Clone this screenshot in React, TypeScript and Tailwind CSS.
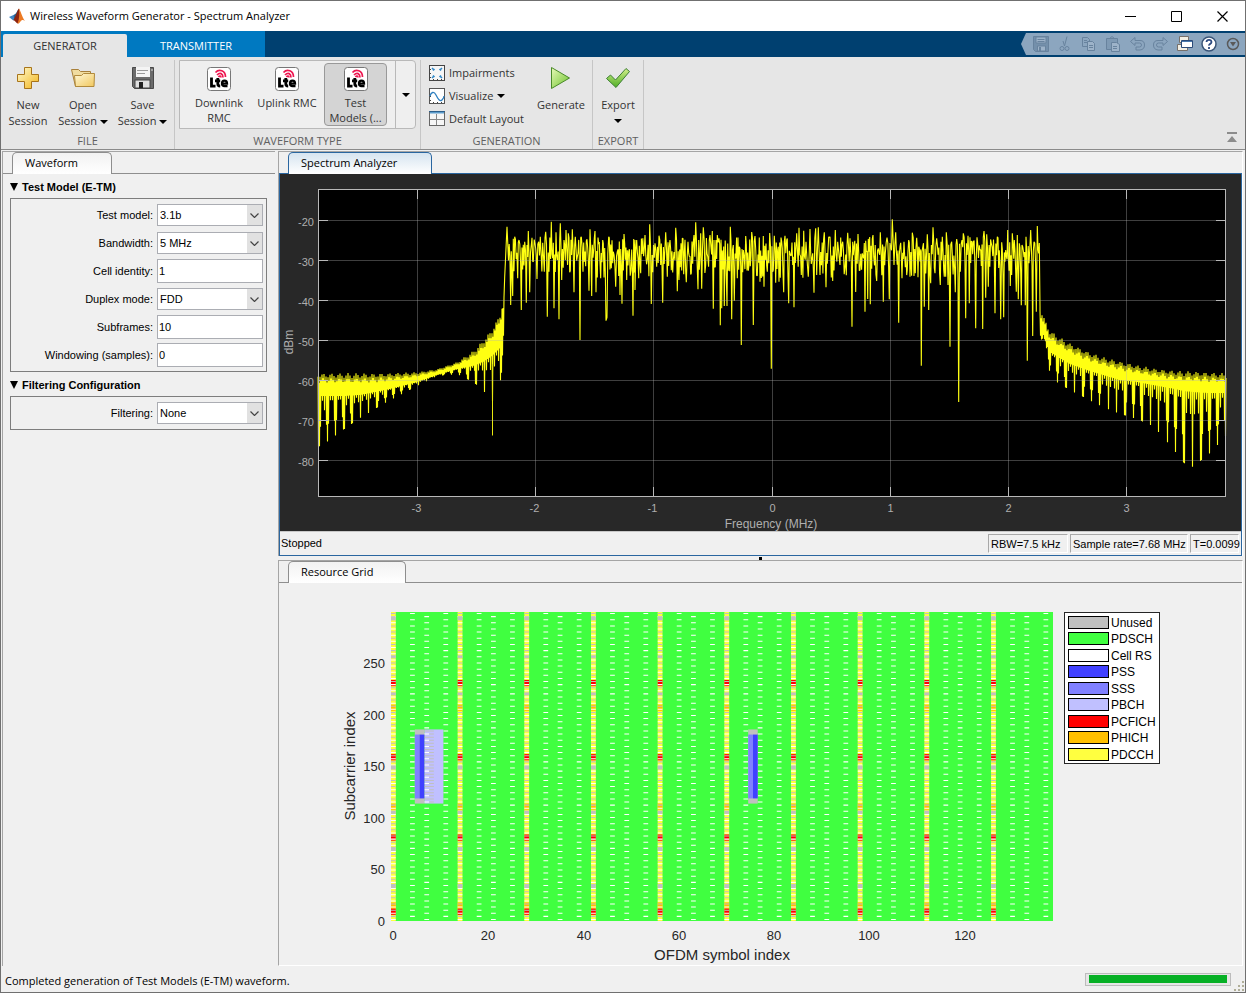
import type { ReactNode } from 'react';

/* ---------- spectrum data ---------- */

type Point = [number, number];

// envelopes are in plot pixels: [x, top, bottom, spike]
const LEFT_SKIRT = [
  [38, 199, 222, 273],
  [47, 199, 222, 268],
  [63, 199, 222, 256],
  [80, 199, 221, 244],
  [105, 199, 216, 229],
  [137, 198, 208, 212],
  [157, 195, 201, 202],
  [177, 188, 195, 200],
  [193, 177, 192, 208],
  [203, 166, 188, 216],
  [212, 155, 182, 228],
  [220, 140, 174, 210],
  [224, 122, 160, 180],
];

const RIGHT_SKIRT = [
  [760, 133, 150, 160],
  [767, 150, 172, 185],
  [770, 156, 178, 199],
  [778, 162, 183, 209],
  [790, 169, 190, 216],
  [807, 177, 196, 225],
  [823, 183, 201, 233],
  [840, 187, 206, 240],
  [857, 191, 208, 245],
  [873, 194, 211, 252],
  [890, 196, 214, 271],
  [904, 197, 217, 289],
  [913, 197, 218, 293],
  [929, 198, 219, 280],
  [946, 199, 219, 262],
];

// dips and peaks inside the occupied band, thirds of a pixel from the offset
const BAND = [
  {
    from: 200,
    points: [
      74, 200, 81, 50, 92, 285, 98, 258, 104, 80, 113, 205, 117, 90, 124, 300, 134, 95, 139, 278, 145, 63, 149, 247,
      154, 105, 160, 155, 165, 100, 171, 207, 176, 95, 181, 80, 188, 98, 193, 185, 197, 65, 202, 320, 207, 185, 214, 35,
      222, 295, 228, 67, 232, 150, 237, 328, 241, 40, 245, 210, 252, 90, 258, 60, 265, 70, 271, 182, 277, 58, 282, 247,
      286, 80, 294, 130, 300, 390, 304, 80, 309, 185, 321, 88, 327, 242, 330, 58, 335, 258, 341, 120, 345, 63, 348, 247,
      356, 102, 362, 205, 368, 90, 378, 332, 381, 322, 386, 80, 394, 175, 400, 125, 407, 230, 412, 125, 420, 255, 426, 281,
      432, 72, 440, 210, 446, 125, 453, 180, 459, 317, 465, 90, 465, 240, 470, 90, 476, 205, 482, 190, 495, 75, 502, 150,
      509, 43, 514, 282, 525, 100, 530, 170, 537, 77, 542, 165, 548, 278, 557, 67, 562, 200, 570, 90, 580, 150, 587, 53,
      592, 244, 597, 210, 607, 85, 613, 130, 619, 217, 624, 95, 634, 190, 642, 75, 647, 37, 654, 238, 662, 70, 665, 236,
      670, 52, 677, 165, 690, 75, 697, 63, 700, 296, 706, 170, 712, 75, 717, 85, 721, 346, 725, 155, 725, 295, 733, 288,
      738, 160, 741, 288, 751, 50, 755, 328, 760, 105, 763, 272, 772, 205, 778, 110, 784, 405, 790, 120, 797, 78, 807, 165,
      815, 66, 820, 345, 825, 78, 832, 197, 840, 215, 850, 78, 852, 230, 862, 185, 869, 69, 874, 476, 880, 180,
    ],
  },
  {
    from: 490,
    points: [
      13, 77, 17, 218, 25, 110, 27, 215, 35, 95, 41, 247, 45, 77, 50, 90, 56, 280, 60, 130, 72, 292, 80, 70, 87, 53, 94, 195,
      101, 62, 108, 95, 115, 200, 120, 57, 126, 145, 132, 248, 137, 55, 140, 195, 145, 52, 150, 195, 163, 67, 168, 232,
      176, 80, 180, 80, 188, 213, 196, 60, 203, 95, 210, 165, 218, 95, 225, 170, 233, 68, 240, 85, 246, 350, 252, 110,
      257, 246, 264, 72, 270, 180, 277, 130, 285, 305, 289, 125, 293, 267, 297, 125, 301, 283, 309, 75, 320, 213, 325, 115,
      331, 67, 340, 275, 346, 130, 351, 83, 358, 268, 362, 110, 367, 28, 372, 165, 377, 67, 386, 338, 390, 110, 396, 205,
      402, 95, 412, 180, 416, 90, 420, 200, 427, 68, 432, 198, 440, 83, 446, 110, 454, 467, 458, 112, 463, 290, 472, 73,
      476, 300, 482, 220, 489, 52, 495, 190, 500, 85, 511, 225, 517, 80, 523, 200, 529, 67, 534, 225, 540, 410, 545, 95,
      556, 247, 560, 87, 566, 576, 571, 185, 576, 90, 580, 70, 587, 325, 594, 77, 598, 280, 606, 95, 610, 95, 617, 355,
      621, 82, 630, 120, 638, 357, 642, 63, 647, 263, 650, 73, 655, 230, 664, 100, 675, 310, 682, 80, 692, 328, 695, 97,
      701, 322, 707, 120, 713, 60, 721, 228, 727, 70, 733, 90, 739, 245, 742, 75, 745, 268, 748, 100, 754, 286, 758, 110,
      766, 286, 768, 80, 772, 452, 777, 160, 782, 60, 788, 378, 792, 95, 799, 305, 802, 48, 806, 130, 810, 290,
    ],
  },
];

function random(seed: number) {
  let s = seed;
  return () => {
    s = (s * 1664525 + 1013904223) % 4294967296;
    return s / 4294967296;
  };
}

function skirt(rows: number[][], firstSpike: number, period: number): Point[] {
  const out: Point[] = [];
  const end = rows[rows.length - 1][0];
  let i = 0;
  for (let n = 0, x = rows[0][0]; x <= end; n++, x += 0.5) {
    while (i < rows.length - 2 && rows[i + 1][0] < x) i++;
    const [a, b] = [rows[i], rows[i + 1]];
    const t = (x - a[0]) / (b[0] - a[0]);
    const [top, solid, spike] = [1, 2, 3].map((k) => a[k] + (b[k] - a[k]) * t);
    const phase = (((x - firstSpike) / period) % 1 + 1) % 1;
    const d = Math.min(phase, 1 - phase);
    const depth = d < 0.08 ? 1 : d < 0.2 ? 0.62 : d < 0.34 ? 0.3 : 0.1;
    const spread = Math.min(1, (solid - top) / 20);
    if (n % 2 === 0) out.push([x, top + (1 - 2 * d) * 5 * spread + (n % 4 ? 5 * spread : 0)]);
    else out.push([x, solid + (n % 4 === 1 || d < 0.08 ? (spike - solid) * depth : 0)]);
  }
  return out;
}

function band(): Point[] {
  const rnd = random(11);
  const keys: Point[] = BAND.flatMap(({ from, points }) => {
    const out: Point[] = [];
    for (let i = 0; i < points.length; i += 2) out.push([from + points[i] / 3, 36 + points[i + 1] / 3]);
    return out;
  });
  const out: Point[] = [];
  keys.forEach((key, i) => {
    out.push(key);
    const next = keys[i + 1];
    if (!next || i < 1) return;
    const gap = next[0] - key[0];
    const steps = Math.floor(gap / 0.65);
    for (let k = 1; k < steps; k++) {
      const y = k % 2 ? 63 + rnd() * 20 : 80 + rnd() * 24;
      out.push([key[0] + (gap * k) / steps, y]);
    }
  });
  return out;
}

const toPath = (points: Point[]) => 'M' + points.map(([x, y]) => `${x.toFixed(1)} ${y.toFixed(1)}`).join('L');

const TRACE = toPath([
  ...skirt(LEFT_SKIRT, 47.3, 8.27),
  ...band(),
  ...skirt(RIGHT_SKIRT, 769.3, 8.42),
]);

const FREQ_TICKS = [-3, -2, -1, 0, 1, 2, 3].map((label, i) => ({ label, x: 137.5 + Math.round(i * 118.2) }));
const POWER_TICKS = [-20, -30, -40, -50, -60, -70, -80].map((label, i) => ({ label, y: 46.5 + i * 40 }));

const SpectrumPlot = () => (
  <svg viewBox="0 0 961 357" className="block w-full h-auto bg-[#282828] font-['Liberation_Sans',sans-serif]">
    <rect x="38.5" y="15.5" width="907" height="307" fill="#000" />
    <path d={TRACE} fill="none" stroke="#ffff12" strokeWidth="1.1" strokeLinejoin="bevel" />
    {/* the deep null left of the band */}
    <path d="M212.500 190V261.500" stroke="#e8e810" />
    <g stroke="#b4b4b4" strokeOpacity="0.35">
      {FREQ_TICKS.map(({ x }) => (
        <path key={x} d={`M${x} 16V322`} />
      ))}
      {POWER_TICKS.map(({ y }) => (
        <path key={y} d={`M39 ${y}H945`} />
      ))}
    </g>
    <g stroke="#b8b8b8" fill="none">
      <rect x="38.5" y="15.5" width="907" height="307" />
      {FREQ_TICKS.map(({ x }) => (
        <path key={x} d={`M${x} 16v9M${x} 322v-9`} />
      ))}
      {POWER_TICKS.map(({ y }) => (
        <path key={y} d={`M39 ${y}h9M945 ${y}h-9`} />
      ))}
    </g>
    <g fill="#afafaf" fontSize="11">
      {FREQ_TICKS.map(({ label, x }) => (
        <text key={label} x={x - (label < 0 ? 1 : 0)} y="338" textAnchor="middle">
          {label}
        </text>
      ))}
      {POWER_TICKS.map(({ label, y }) => (
        <text key={label} x="34" y={y + 5.5} textAnchor="end">
          {label}
        </text>
      ))}
      <text x="491" y="354" textAnchor="middle" fontSize="12">
        Frequency (MHz)
      </text>
      <text transform="translate(13 168) rotate(-90)" textAnchor="middle" fontSize="12">
        dBm
      </text>
    </g>
  </svg>
);

/* ---------- resource grid ---------- */

const COL = 662 / 139;
const ROW = 309 / 300;
const GRID_LEFT = 112;
const GRID_BOTTOM = 338;

const colX = (symbol: number) => GRID_LEFT + symbol * COL;
const rowY = (k: number) => GRID_BOTTOM - k * ROW;

const LEGEND = [
  ['Unused', '#c0c0c0'],
  ['PDSCH', '#40ff40'],
  ['Cell RS', '#ffffff'],
  ['PSS', '#4040ff'],
  ['SSS', '#8080ff'],
  ['PBCH', '#c0c0ff'],
  ['PCFICH', '#ff0000'],
  ['PHICH', '#ffc000'],
  ['PDCCH', '#ffff40'],
];

type BlockProps = { symbol: number; cols?: number; from: number; to: number; fill: string };

const Block = ({ symbol, cols = 1, from, to, fill }: BlockProps) => (
  <rect x={colX(symbol)} y={rowY(to)} width={cols * COL} height={(to - from) * ROW} fill={fill} />
);

type PilotProps = { symbol: number; shift: number; from?: number; to?: number; stroke?: string };

const Pilots = ({ symbol, shift, from = 0, to = 300, stroke = '#fff' }: PilotProps) => (
  <path
    d={`M${colX(symbol) + COL / 2} ${rowY(from + shift)}V${rowY(to)}`}
    stroke={stroke}
    strokeWidth={COL}
    strokeDasharray={`${ROW} ${5 * ROW}`}
  />
);

const UNUSED = [[32, 36], [68, 72], [104, 107], [147, 151], [219, 222], [255, 258], [292, 296]];
const PCFICH = [6, 78, 156, 228];
const PHICH = [12, 108, 204];

const SUBFRAMES = Array.from({ length: 10 }, (_, i) => i * 14);

const ResourceGridPlot = () => (
  <svg viewBox="0 0 963 382" className="block w-full h-auto font-['Liberation_Sans',sans-serif]">
    <rect x={GRID_LEFT} y="29" width="662" height="309" fill="#40ff40" />
    {SUBFRAMES.map((s) => (
      <g key={s}>
        <Block symbol={s} from={0} to={300} fill="#ffff40" />
        {PHICH.map((k) => (
          <Block key={k} symbol={s} from={k} to={k + 6} fill="#ffc000" />
        ))}
        {PCFICH.map((k) => (
          <Block key={k} symbol={s} from={k} to={k + 6} fill="#ff0000" />
        ))}
        <Pilots symbol={s} shift={1} />
        <Pilots symbol={s} shift={4} stroke="#c0c0c0" />
        {UNUSED.map(([from, to]) => (
          <Block key={from} symbol={s} from={from} to={to} fill="#c0c0c0" />
        ))}
        <Pilots symbol={s + 4} shift={4} />
        <Pilots symbol={s + 7} shift={1} />
        {s + 11 < 139 && <Pilots symbol={s + 11} shift={4} />}
      </g>
    ))}

    {/* broadcast channel */}
    <Block symbol={7} cols={4} from={114} to={186} fill="#c0c0ff" />
    <Pilots symbol={7} shift={1} from={114} to={186} />
    <Pilots symbol={7} shift={4} from={114} to={186} stroke="#c0c0c0" />
    <Pilots symbol={8} shift={1} from={114} to={186} stroke="#c0c0c0" />
    <Pilots symbol={8} shift={4} from={114} to={186} stroke="#c0c0c0" />

    {/* sync signals */}
    {[5, 75].map((symbol) => (
      <g key={symbol}>
        <Block symbol={symbol} cols={2} from={114} to={186} fill="#c0c0c0" />
        <Block symbol={symbol} from={119} to={181} fill="#8080ff" />
        <Block symbol={symbol + 1} from={119} to={181} fill="#4040ff" />
      </g>
    ))}

    <g fill="#262626" fontSize="13">
      {[0, 50, 100, 150, 200, 250].map((v) => (
        <text key={v} x="106" y={Math.floor(rowY(v)) + 5} textAnchor="end">
          {v}
        </text>
      ))}
      {[0, 20, 40, 60, 80, 100, 120].map((v) => (
        <text key={v} x={Math.round(colX(v)) + 2} y="357" textAnchor="middle">
          {v}
        </text>
      ))}
      <text x="443" y="377" textAnchor="middle" fontSize="15">
        OFDM symbol index
      </text>
      <text transform="translate(76 183) rotate(-90)" textAnchor="middle" fontSize="15">
        Subcarrier index
      </text>
    </g>

    <rect x="785.5" y="29.5" width="95" height="151" fill="#fff" stroke="#262626" />
    {LEGEND.map(([name, fill], i) => {
      const y = 33 + Math.floor(i * 16.5);
      return (
        <g key={name}>
          <rect x="789.5" y={y + 0.5} width="40" height="12" fill={fill} stroke="#000" />
          <text x="832" y={y + 11} fontSize="12">
            {name}
          </text>
        </g>
      );
    })}
  </svg>
);

/* ---------- icons ---------- */

const MatlabLogo = () => (
  <svg viewBox="0 0 16 16" className="size-4">
    <path d="M0 9L4.500 7 7 9.500 4.300 12.500z" fill="#3f86c4" />
    <path d="M4.500 7C6.500 6.500 7.500 4.500 9.500 1L8.500 8 5.500 11z" fill="#27608f" />
    <path d="M10 .500C8.500 1.500 7.500 7 4.300 12.200 6 12 7 15 8.500 15.500c2-.500 3-5 4.500-4z" fill="#8c2410" />
    <path d="M10 .500c1.500 2 3 8.500 6 12.500-2-1.500-3.500-1-4.500.500-1 1.500-2 2.500-3 2C10.500 11 10.500 5 10 .500z" fill="#ec7a24" />
  </svg>
);

const PlusIcon = () => (
  <svg viewBox="0 0 24 24" className="size-6">
    <defs>
      <linearGradient id="gold" x1="0" y1="0" x2="1" y2="1">
        <stop offset="0" stopColor="#fffbd0" />
        <stop offset="1" stopColor="#f2b51c" />
      </linearGradient>
    </defs>
    <path d="M8.500 1.500h7v7h7v7h-7v7h-7v-7h-7v-7h7z" fill="url(#gold)" stroke="#a8741a" />
  </svg>
);

const FolderIcon = () => (
  <svg viewBox="0 0 26 24" className="w-[26px] h-6">
    <defs>
      <linearGradient id="folder" x1="0" y1="0" x2="1" y2="1">
        <stop offset="0" stopColor="#fff9da" />
        <stop offset="1" stopColor="#f1c75c" />
      </linearGradient>
    </defs>
    <path d="M5.500 20.500L1.500 3.500h7l2 2h10v4z" fill="#f0dca0" stroke="#a8803a" />
    <path d="M5.500 20.500L4.500 9.500h7l2-2h11l-.500 13z" fill="url(#folder)" stroke="#b18a3c" />
  </svg>
);

const SaveIcon = () => (
  <svg viewBox="0 0 24 24" className="size-6">
    <path d="M1.500 1.500h21v21h-19l-2-2z" fill="#6b6b6b" stroke="#4a4a4a" />
    <rect x="5" y="1" width="14" height="10" fill="#f4f4f4" />
    <path d="M6 4.500h11M6 7.500h8" stroke="#9a9a9a" />
    <rect x="4" y="14" width="15" height="8" fill="#e0e0e0" stroke="#444" />
    <rect x="8" y="16" width="4" height="6" fill="#222" />
    <path d="M21 3v2" stroke="#ddd" />
  </svg>
);

const LteIcon = () => (
  <svg viewBox="0 0 24 24" className="size-6">
    <rect x="0.500" y="0.500" width="23" height="23" rx="3" fill="#fff" stroke="#777" />
    <g stroke="#ee1650" fill="none" strokeWidth="1.700">
      <path d="M8.500 5.500C12 1.500 18.500 3.500 18.500 10" />
      <path d="M10 8c3-3 6-1.500 6 2.500" />
      <path d="M11.500 10c1-1.500 2.500-1 2.500.500" />
    </g>
    <g stroke="#000" fill="none" strokeWidth="2.800">
      <path d="M4.500 10.500v8.600H8.500" />
      <path d="M10.800 11v6q0 2 2.400 2M8 13.800h5.200" />
      <path d="M15 16.600h5q0-3-2.500-3t-2.500 2.800 2.700 2.700h2.800" strokeWidth="2.300" />
    </g>
  </svg>
);

const ImpairmentsIcon = () => (
  <svg viewBox="0 0 16 16" className="size-4">
    <rect x="0.500" y="0.500" width="15" height="15" fill="#f6f6f6" stroke="#444" />
    <path d="M4.500 15v-1M8.500 15v-1M12.500 15v-1M1 4.500h1M1 8.500h1M1 12.500h1" stroke="#444" />
    <path d="M4 5.500L5.500 4M3 3l1.500 1.500M12 5.500L10.500 4M13 3l-1.500 1.500M4 10.500L5.500 12M3 13l1.500-1.500M12 10.500L10.500 12M13 13l-1.500-1.500" stroke="#2d86c6" strokeWidth="1.500" fill="none" />
  </svg>
);

const VisualizeIcon = () => (
  <svg viewBox="0 0 16 16" className="size-4">
    <rect x="0.500" y="0.500" width="15" height="15" fill="#fff" stroke="#555" />
    <path d="M1 12.500h1M1 8.500h1M4.500 15v-1M8.500 15v-1M12.500 15v-1" stroke="#444" />
    <path d="M1 8C2 4 5 3 7 7s4 7 6 5c1-1 2-3 2-4" fill="none" stroke="#2d7fc0" strokeWidth="1.300" />
  </svg>
);

const LayoutIcon = () => (
  <svg viewBox="0 0 16 16" className="size-4">
    <rect x="0.500" y="0.500" width="15" height="14" fill="#f6f6f6" stroke="#666" />
    <path d="M1 1.500h14" stroke="#5c9ccc" strokeWidth="2" />
    <path d="M0 .500h16" stroke="#2c5f8c" />
    <path d="M7.500 3v11M1 8.500h14" stroke="#888" />
  </svg>
);

const PlayIcon = () => (
  <svg viewBox="0 0 24 24" className="size-6">
    <defs>
      <linearGradient id="play" x1="0" y1="0" x2="1" y2="1">
        <stop offset="0" stopColor="#e8f9b8" />
        <stop offset="1" stopColor="#6ac22a" />
      </linearGradient>
    </defs>
    <path d="M2.500 1.500v21L20.500 12z" fill="url(#play)" stroke="#4a8a2a" />
  </svg>
);

const CheckIcon = () => (
  <svg viewBox="0 0 26 24" className="w-[26px] h-6">
    <defs>
      <linearGradient id="check" x1="0" y1="0" x2="0" y2="1">
        <stop offset="0" stopColor="#d3ef8a" />
        <stop offset="1" stopColor="#4fae25" />
      </linearGradient>
    </defs>
    <path d="M1.500 12.500l4-3.500 5 5L21 2.500l3.500 3L11 21.500z" fill="url(#check)" stroke="#3d7f35" />
  </svg>
);

const Caret = () => (
  <svg viewBox="0 0 8 4" className="inline-block w-2 h-1 shrink-0 align-middle">
    <path d="M0 0h8L4 4z" fill="#000" />
  </svg>
);

/* ---------- toolstrip ---------- */

const QUICK_ACTIONS: { label: string; icon: ReactNode; dim?: boolean }[] = [
  {
    label: 'Save',
    dim: true,
    icon: (
      <>
        <path d="M.500.500h15v15H2.500l-2-2z" fill="#7490ab" />
        <path d="M3 1h10v6H3z" fill="#9db3c9" />
        <path d="M4.500 3.500h7M4.500 5.500h7" />
        <path d="M4.500 15v-5h8v5z" fill="#9db3c9" />
        <path d="M7 11v4" strokeWidth="2" />
      </>
    ),
  },
  {
    label: 'Cut',
    dim: true,
    icon: (
      <>
        <path d="M7.500 10L10 .500M7.500 10L6 5" />
        <circle cx="5" cy="12.500" r="2" />
        <circle cx="10" cy="12.500" r="2" />
      </>
    ),
  },
  {
    label: 'Copy',
    dim: true,
    icon: (
      <>
        <path d="M1.500 1.500h5l2 2v7h-7z" />
        <path d="M6.500 5.500h5l2 2v7h-7z" fill="#9db3c9" />
        <path d="M3 4.500h3M3 6.500h3M8 9.500h4M8 11.500h4" />
      </>
    ),
  },
  {
    label: 'Paste',
    dim: true,
    icon: (
      <>
        <path d="M1.500 2.500h11v11h-11z" fill="#7f9ab4" />
        <path d="M4.500 2.500l2.500-2 2.500 2z" />
        <path d="M6.500 6.500h5l3 2v7h-8z" fill="#9db3c9" />
        <path d="M8 10.500h4M8 12.500h4" />
      </>
    ),
  },
  {
    label: 'Undo',
    dim: true,
    icon: <path d="M6 1.500L1.500 5.500 6 9.500v-2.500h4.500q2 0 2 2t-2 2H7v3h4q4.500-.500 4.500-5T11 4.500H6z" />,
  },
  {
    label: 'Redo',
    dim: true,
    icon: <path d="M10 1.500l4.500 4-4.500 4v-2.500H5.500q-2 0-2 2t2 2H9v3H5Q.500 13.500.500 9T5 4.500h5z" />,
  },
  {
    label: 'Switch windows',
    icon: (
      <>
        <path d="M2.500.500h9v6h-9zM.500 8.500h10v6h-10z" fill="#f3efe4" stroke="#77706a" />
        <path d="M4.500 4.500h11v7h-11z" fill="#fff" stroke="#2a4a78" />
        <path d="M5 5.500h10" stroke="#4a7ab0" />
      </>
    ),
  },
  {
    label: 'Help',
    icon: (
      <>
        <circle cx="8" cy="8" r="7" fill="#fff" stroke="#3a5578" strokeWidth="1.500" />
        <path d="M5.500 6q.200-2.200 2.500-2.200T10.500 6q0 1.200-1.300 1.900T8 9.700M8 11v2" stroke="#2c4a80" strokeWidth="1.800" />
      </>
    ),
  },
  {
    label: 'Quick access options',
    icon: (
      <>
        <circle cx="8" cy="8" r="5.500" stroke="#5a5a5a" strokeWidth="1.500" />
        <path d="M5 6h6l-3 4.500z" fill="#5a5a5a" stroke="none" />
      </>
    ),
  },
];

const Section = ({ title, children }: { title: string; children: ReactNode }) => (
  <section className="flex flex-col justify-between border-r border-[#c6c6c6]">
    <div className="flex flex-1">{children}</div>
    <h2 className="text-center leading-4 text-[#606060]">{title}</h2>
  </section>
);

type ToolProps = { icon: ReactNode; lines: string[]; className: string; menu?: boolean };

const Tool = ({ icon, lines, className, menu }: ToolProps) => (
  <button className={`flex flex-col items-center pt-1.5 leading-4 ${className}`}>
    {icon}
    <span className="pt-[7px] whitespace-nowrap">
      {lines.map((line, i) => (
        <span key={line} className="block">
          {line} {menu && i > 0 && <Caret />}
        </span>
      ))}
      {menu && lines.length === 1 && <span className="flex h-4 items-center justify-center"><Caret /></span>}
    </span>
  </button>
);

const GALLERY = [
  { lines: ['Downlink', 'RMC'], className: 'w-[78px] pt-1.5' },
  { lines: ['Uplink RMC'], className: 'w-[58px] pt-1.5' },
  {
    lines: ['Test', 'Models (...'],
    className: 'my-0.5 mx-2 w-[63px] rounded-sm border border-[#999] bg-[#d4d4d4] pt-[3px]',
    selected: true,
  },
];

const Toolstrip = () => (
  <div className="flex h-23 bg-[#e6e6e6] pt-[3px] text-[#333]">
    <Section title="FILE">
      <Tool icon={<PlusIcon />} lines={['New', 'Session']} className="w-[54px]" />
      <Tool icon={<FolderIcon />} lines={['Open', 'Session']} className="w-[56px]" menu />
      <Tool icon={<SaveIcon />} lines={['Save', 'Session']} className="w-[63px]" menu />
    </Section>

    <Section title="WAVEFORM TYPE">
      <div className="flex h-[69px] mx-1 rounded-r-sm border border-[#b9b9b9] bg-[#efefef] leading-[15px]">
        {GALLERY.map(({ lines, className, selected }) => (
          <button key={lines[0]} aria-pressed={!!selected} className={`flex flex-col items-center ${className}`}>
            <LteIcon />
            <span className="pt-1 whitespace-nowrap">
              {lines.map((line) => (
                <span key={line} className="block">
                  {line}
                </span>
              ))}
            </span>
          </button>
        ))}
        <button aria-label="More waveforms" className="flex w-5 items-center justify-center border-l border-[#b9b9b9]">
          <Caret />
        </button>
      </div>
    </Section>

    <Section title="GENERATION">
      <div className="flex w-[109px] flex-col gap-[7px] pt-[5px] pl-2">
        <button className="flex h-4 items-center gap-1 whitespace-nowrap">
          <ImpairmentsIcon /> Impairments
        </button>
        <button className="flex h-4 items-center gap-1 whitespace-nowrap">
          <VisualizeIcon /> Visualize <Caret />
        </button>
        <button className="flex h-4 items-center gap-1 whitespace-nowrap">
          <LayoutIcon /> Default Layout
        </button>
      </div>
      <Tool icon={<PlayIcon />} lines={['Generate']} className="w-[62px]" />
    </Section>

    <Section title="EXPORT">
      <Tool icon={<CheckIcon />} lines={['Export']} className="w-[50px]" menu />
    </Section>

    <button aria-label="Minimize toolstrip" className="mt-auto mr-[7px] mb-1.5 ml-auto">
      <svg viewBox="0 0 12 12" className="size-3">
        <path d="M1 1h10v2H1zM6 5l5 6H1z" fill="#8c8c8c" />
      </svg>
    </button>
  </div>
);

/* ---------- panels ---------- */

type PanelTabProps = { label: string; width: string; active?: boolean };

const PanelTab = ({ label, width, active }: PanelTabProps) => (
  <div className={`flex h-[22px] border-b pl-[9px] ${active ? 'border-[#2a66a0]' : 'border-[#8e8e8e]'}`}>
    <button
      className={`h-[22px] rounded-t-[5px] border border-b-0 pl-3 text-left text-black ${width} ${
        active ? 'border-[#2a66a0] bg-linear-to-b from-[#d6e4f0] to-white' : 'border-[#8e8e8e] bg-linear-to-b from-[#f2f2f2] to-white'
      }`}
    >
      {label}
    </button>
  </div>
);

type FieldProps = { id: string; label: string; value: string; options?: string[] };

const Field = ({ id, label, value, options }: FieldProps) => (
  <div className="flex h-7 items-center justify-end gap-1 pr-[3px]">
    <label htmlFor={id}>{label}</label>
    {options ? (
      <div className="relative h-[22px] w-[106px]">
        <select
          id={id}
          defaultValue={value}
          className="h-full w-full appearance-none border border-[#abadb3] bg-white pl-0.5 outline-none"
        >
          {options.map((o) => (
            <option key={o}>{o}</option>
          ))}
        </select>
        <span className="pointer-events-none absolute inset-y-px right-px flex w-[15px] items-center justify-center bg-[#e1e1e1]">
          <svg viewBox="0 0 9 5" className="w-[9px] h-[5px]">
            <path d="M.500.500l4 4 4-4" fill="none" stroke="#444" strokeWidth="1.200" />
          </svg>
        </span>
      </div>
    ) : (
      <input id={id} defaultValue={value} className="h-6 w-[106px] border border-[#abadb3] bg-white px-px outline-none" />
    )}
  </div>
);

const Group = ({ title, children }: { title: string; children: ReactNode }) => (
  <div className="pl-[7px] pr-2">
    <button className="flex h-6 w-full items-center gap-1 pt-0.5 font-bold">
      <svg viewBox="0 0 8 8" className="size-2">
        <path d="M0 0h8L4 8z" />
      </svg>
      {title}
    </button>
    <div className="border border-[#7d7d7d] py-0.5">{children}</div>
  </div>
);

const WaveformPanel = () => (
  <aside className="w-[273px] shrink-0 border-t border-l border-[#a5a5a5]">
    <PanelTab label="Waveform" width="w-[100px]" />
    <form className="font-['Liberation_Sans',sans-serif] text-[11px] text-black">
      <Group title="Test Model (E-TM)">
        <Field id="model" label="Test model:" value="3.1b" options={['1.1', '1.2', '2', '3.1', '3.1b', '3.2', '3.3']} />
        <Field id="bandwidth" label="Bandwidth:" value="5 MHz" options={['1.4 MHz', '3 MHz', '5 MHz', '10 MHz', '20 MHz']} />
        <Field id="cell" label="Cell identity:" value="1" />
        <Field id="duplex" label="Duplex mode:" value="FDD" options={['FDD', 'TDD']} />
        <Field id="subframes" label="Subframes:" value="10" />
        <Field id="windowing" label="Windowing (samples):" value="0" />
      </Group>
      <Group title="Filtering Configuration">
        <Field id="filtering" label="Filtering:" value="None" options={['None', 'Lowpass']} />
      </Group>
    </form>
  </aside>
);

const StatusCell = ({ children, width }: { children: ReactNode; width: string }) => (
  <span className={`h-[19px] border border-t-[#a8a8a8] border-r-white border-b-white border-l-[#a8a8a8] pl-0.5 leading-[19px] whitespace-nowrap ${width}`}>
    {children}
  </span>
);

export default function App() {
  return (
    <div className="flex min-h-screen flex-col border border-[#707070] bg-[#f0f0f0] font-['Open_Sans','Noto_Sans',sans-serif] text-[11px]">
      {/* title bar */}
      <header className="flex h-[30px] items-center bg-white pl-2 text-black">
        <MatlabLogo />
        <h1 className="pl-[5px]">Wireless Waveform Generator - Spectrum Analyzer</h1>
        <div className="ml-auto flex">
          <button aria-label="Minimize" className="flex h-[30px] w-[46px] items-center justify-center">
            <svg viewBox="0 0 11 11" className="size-[11px]"><path d="M0 5.500h11" stroke="#000" /></svg>
          </button>
          <button aria-label="Maximize" className="flex h-[30px] w-[46px] items-center justify-center">
            <svg viewBox="0 0 11 11" className="size-[11px]"><path d="M.500.500h10v10h-10z" stroke="#000" fill="none" /></svg>
          </button>
          <button aria-label="Close" className="flex h-[30px] w-[46px] items-center justify-center">
            <svg viewBox="0 0 11 11" className="size-[11px]"><path d="M.500.500l10 10M10.500.500l-10 10" stroke="#000" strokeWidth="1.200" /></svg>
          </button>
        </div>
      </header>

      {/* toolstrip tabs and quick access bar */}
      <nav className="flex h-[26px] bg-[#004070]">
        <div className="flex items-end bg-[#0079c1] pl-0.5">
          <button className="h-[23px] w-[124px] rounded-t-xs bg-[#e6e6e6] pt-px text-[#333]">GENERATOR</button>
          <button className="h-[23px] w-[138px] pt-px text-white">TRANSMITTER</button>
        </div>
        <div className="my-0.5 ml-auto flex items-center gap-2 bg-[#8ca6bf] pr-1 pl-3 [clip-path:polygon(5px_0,100%_0,100%_100%,5px_100%,0_50%)]">
          {QUICK_ACTIONS.map(({ label, icon, dim }) => (
            <button key={label} aria-label={label}>
              <svg viewBox="0 0 16 16" className="size-4" fill="none" stroke={dim ? '#68839e' : '#333'}>
                {icon}
              </svg>
            </button>
          ))}
        </div>
      </nav>

      <Toolstrip />

      <main className="flex flex-1 gap-[3px] border-t border-[#8a8a8a] pt-px pr-0.5 pl-px">
        <WaveformPanel />

        <div className="flex min-w-0 flex-1 flex-col">
          <section className="border-t border-r border-l border-t-[#a5a5a5] border-r-white border-l-[#a5a5a5]">
            <PanelTab label="Spectrum Analyzer" width="w-[144px]" active />
            <div className="border border-t-0 border-[#2a66a0] font-['Liberation_Sans',sans-serif] text-black">
              <SpectrumPlot />
              <div className="flex h-6 items-center gap-0.5 border-t border-[#c8c8c8] pr-0.5 pl-px">
                <span className="mr-auto">Stopped</span>
                <StatusCell width="w-20">RBW=7.5 kHz</StatusCell>
                <StatusCell width="w-[118px]">Sample rate=7.68 MHz</StatusCell>
                <StatusCell width="w-[49px]">T=0.0099</StatusCell>
              </div>
            </div>
          </section>

          <div className="flex h-1 items-center justify-center">
            <span className="size-[3px] bg-black" />
          </div>

          <section className="flex-1 border-t border-r border-b border-l border-t-[#a5a5a5] border-r-white border-b-white border-l-[#a5a5a5]">
            <PanelTab label="Resource Grid" width="w-[118px]" />
            <ResourceGridPlot />
          </section>
        </div>
      </main>

      <footer className="flex h-[26px] items-center pl-1 text-black">
        <p className="pt-1">Completed generation of Test Models (E-TM) waveform.</p>
        <div
          role="progressbar"
          aria-label="Generation progress"
          aria-valuenow={100}
          className="ml-auto h-[13px] w-[146px] border border-[#bcbcbc] bg-[#e6e6e6] px-[3px] pt-px"
        >
          <div className="h-2 bg-[#06b025]" />
        </div>
        <svg viewBox="0 0 12 12" className="ml-0.5 size-3 self-end">
          <path d="M9 1h2v2H9zM9 5h2v2H9zM9 9h2v2H9zM5 5h2v2H5zM5 9h2v2H5zM1 9h2v2H1z" fill="#b0ae98" />
        </svg>
      </footer>
    </div>
  );
}
